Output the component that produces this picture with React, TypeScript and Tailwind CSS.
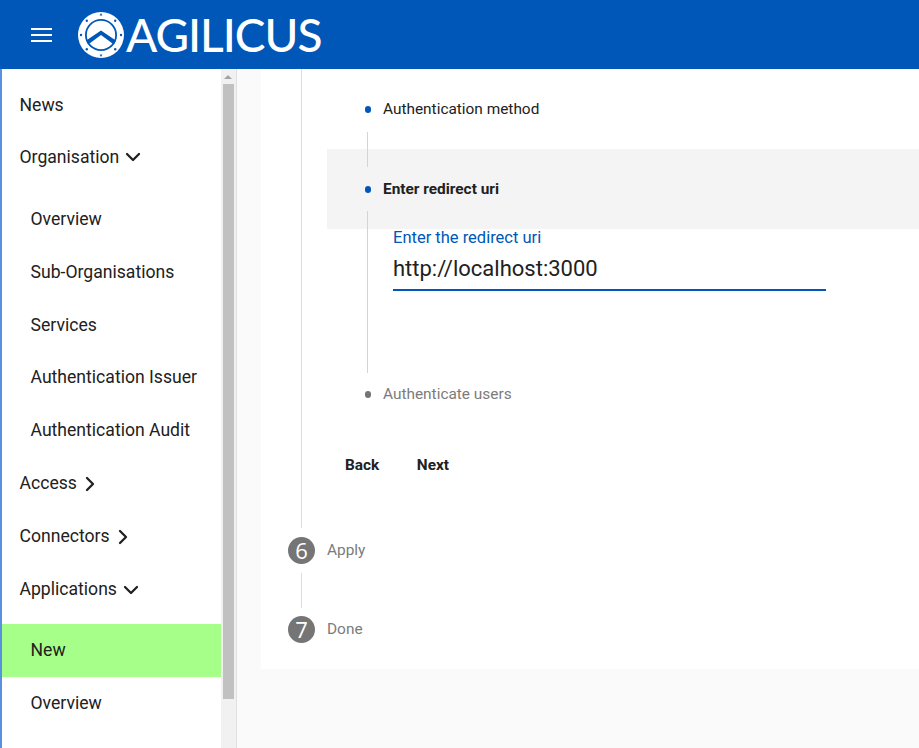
import React from "react";
import { ChevronDown, ChevronRight } from "lucide-react";

function Logo() {
  return (
    <svg width="46" height="46" viewBox="0 0 46 46" className="block">
      <circle cx="23" cy="23" r="23" fill="#fff" />
      <circle cx="23" cy="23" r="16" fill="#0057b8" />
      <circle cx="23" cy="23" r="14.2" fill="#fff" />
      <path d="M8.2 28.5 L23 18.5 L37.8 28.5 L35.8 32.5 L23 23 L10.2 32.5 Z" fill="#0057b8" />
      <path d="M23 1 L24.4 3.4 H21.6 Z" fill="#0057b8" />
      <path d="M23 45 L24.4 42.6 H21.6 Z" fill="#0057b8" />
      <circle cx="3" cy="23" r="1.2" fill="#0057b8" />
      <circle cx="43" cy="23" r="1.2" fill="#0057b8" />
      <circle cx="8.8" cy="8.8" r="1.2" fill="#0057b8" />
      <circle cx="37.2" cy="8.8" r="1.2" fill="#0057b8" />
      <circle cx="8.8" cy="37.2" r="1.2" fill="#0057b8" />
      <circle cx="37.2" cy="37.2" r="1.2" fill="#0057b8" />
    </svg>
  );
}

function MenuIcon() {
  return (
    <svg width="21" height="14" viewBox="0 0 21 14" className="block">
      <rect x="0" y="0" width="21" height="2" fill="#fff" />
      <rect x="0" y="6" width="21" height="2" fill="#fff" />
      <rect x="0" y="12" width="21" height="2" fill="#fff" />
    </svg>
  );
}

function Item({ label, sub, chev, h, active }: { label: string; sub?: boolean; chev?: "down" | "right"; h: string; active?: boolean }) {
  return (
    <div className={`flex items-center text-[17.6px] text-[#212121] ${h} ${sub ? "pl-[28.5px]" : "pl-[17.5px]"} ${active ? "bg-[#a5ff89]" : ""}`}>
      <span>{label}</span>
      {chev === "down" && <ChevronDown size={24} strokeWidth={2.3} className="ml-[2px] text-[#212121]" />}
      {chev === "right" && <ChevronRight size={24} strokeWidth={2.3} className="ml-[1px] text-[#212121]" />}
    </div>
  );
}

function Dot({ color }: { color: string }) {
  return <span className={`h-[7px] w-[6px] rounded-full ${color}`} />;
}

function Step({ n, label }: { n: string; label: string }) {
  return (
    <div className="flex h-[26px] items-center">
      <div className="flex h-[27px] w-[27px] items-center justify-center rounded-full bg-[#757575] text-[22px] text-white [font-family:'Open_Sans',sans-serif]">{n}</div>
      <span className="ml-[12px] pt-[2px] text-[15.4px] text-[#7b7b7b]">{label}</span>
    </div>
  );
}

export default function App() {
  return (
    <div className="flex h-[748px] w-[919px] flex-col overflow-hidden bg-white [font-family:Roboto,sans-serif]">
      <header className="flex h-[69px] shrink-0 items-center bg-[#0057b8] pl-[31px] text-white">
        <MenuIcon />
        <div className="ml-[26px] flex items-center">
          <Logo />
          <span className="ml-[2px] text-[46px] font-medium leading-none tracking-[-1px] [font-family:Lato,sans-serif]">AGILICUS</span>
        </div>
      </header>
      <div className="flex min-h-0 flex-1">
        <nav className="flex w-[221px] shrink-0 flex-col border-l-2 border-[#5b8fdf] pt-[10px]">
          <Item label="News" h="h-[53px]" />
          <Item label="Organisation" chev="down" h="h-[50px] mb-[2px]" />
          <div className="h-[9px]" />
          <Item label="Overview" sub h="h-[53px]" />
          <Item label="Sub-Organisations" sub h="h-[53px]" />
          <Item label="Services" sub h="h-[53px]" />
          <Item label="Authentication Issuer" sub h="h-[50px] mb-[2px]" />
          <Item label="Authentication Audit" sub h="h-[53px]" />
          <Item label="Access" chev="right" h="h-[53px]" />
          <Item label="Connectors" chev="right" h="h-[53px]" />
          <Item label="Applications" chev="down" h="h-[53px]" />
          <div className="h-[8px]" />
          <Item label="New" sub active h="h-[53px]" />
          <Item label="Overview" sub h="h-[53px]" />
        </nav>
        <div className="flex w-[16px] shrink-0 flex-col items-center border-r border-[#e0e0e0] bg-[#f1f1f1] pr-[1px]">
          <div className="mt-[6px] h-0 w-0 border-x-[4px] border-b-[4px] border-x-transparent border-b-[#a3a3a3]" />
          <div className="mt-[5px] h-[615px] w-[11px] bg-[#c1c1c1]" />
        </div>
        <main className="min-w-0 flex-1 bg-[#fafafa] pl-[24px]">
          <div className="relative h-[600px] bg-white pl-[66px]">
            <div className="absolute left-[40px] top-0 h-[459px] w-px bg-[#dcdcdc]" />
            <div className="absolute left-[40px] top-[504px] h-[35px] w-px bg-[#dcdcdc]" />
            <div className="flex h-[80px] items-center pl-[38px] pt-[1px]">
              <Dot color="bg-[#0057b8]" />
              <span className="ml-[12px] text-[15.4px] text-[#212121]">Authentication method</span>
            </div>
            <div className="flex h-[80px] items-center bg-[#f4f4f4] pl-[38px] pt-[1px]">
              <Dot color="bg-[#0057b8]" />
              <span className="ml-[12px] text-[15.4px] font-bold text-[#212121]">Enter redirect uri</span>
            </div>
            <div className="absolute left-[106px] top-[63px] z-10 h-[35px] w-px bg-[#d4d4d4]" />
            <div className="absolute left-[106px] top-[142px] z-10 h-[162px] w-px bg-[#d4d4d4]" />
            <div className="h-[144px] pl-[66px]">
              <div className="w-[433px]">
                <div className="text-[16.5px] leading-[18px] text-[#0057b8]">Enter the redirect uri</div>
                <div className="mt-[8px] h-[36px] border-b-2 border-[#0057b8] text-[22px] leading-[28px] text-[#212121]">http://localhost:3000</div>
              </div>
            </div>
            <div className="flex h-[42px] items-center pl-[38px] pt-[1px]">
              <Dot color="bg-[#757575]" />
              <span className="ml-[12px] text-[15.4px] text-[#7b7b7b]">Authenticate users</span>
            </div>
            <div className="mt-[39px] flex pl-[18px] text-[15.4px] font-bold text-[#212121]">
              <span>Back</span>
              <span className="ml-[37.5px]">Next</span>
            </div>
            <div className="absolute left-[27px] top-[468px]"><Step n="6" label="Apply" /></div>
            <div className="absolute left-[27px] top-[547px]"><Step n="7" label="Done" /></div>
          </div>
        </main>
      </div>
    </div>
  );
}
